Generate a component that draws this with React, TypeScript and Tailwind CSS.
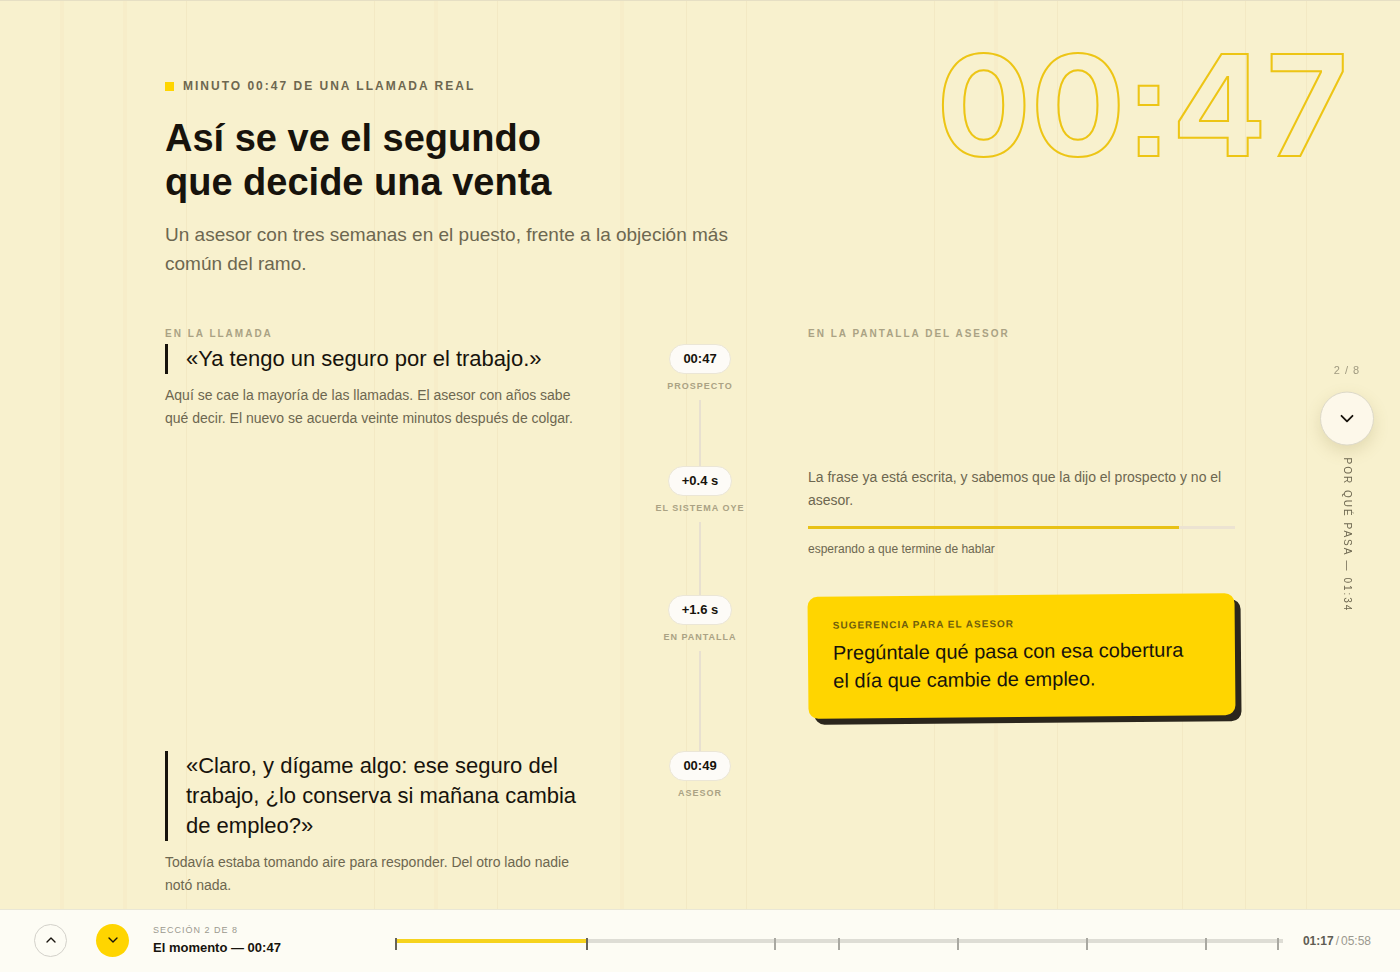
import { ChevronDown, ChevronUp } from "lucide-react"
import type { ReactNode } from "react"

const TOTAL_SECONDS = 358
const CURRENT_SECONDS = 77
const marks = [0, 77, 153, 179, 227, 279, 327, 356]

// background rules, left is in % of the page width
const rules = [
  { left: 4.3, wide: true },
  { left: 8.8, wide: true },
  { left: 13.3, wide: false },
  { left: 26.7, wide: false },
  { left: 31, wide: true },
  { left: 35.5, wide: false },
  { left: 44.3, wide: true },
  { left: 49, wide: false },
  { left: 53.3, wide: false },
  { left: 66.7, wide: false },
  { left: 71, wide: true },
  { left: 75.5, wide: false },
  { left: 84.4, wide: false },
  { left: 88.9, wide: false },
  { left: 93.3, wide: false },
]

function ColumnLabel({ children }: { children: ReactNode }) {
  return <h2 className="text-[10px] leading-5 font-bold tracking-[2px] uppercase text-[#aaa284]">{children}</h2>
}

function Quote({ children }: { children: ReactNode }) {
  return (
    <blockquote className="border-l-3 border-[#17130c] pl-[18px] text-[22px] leading-[30px] text-[#17130c]">
      {children}
    </blockquote>
  )
}

function Note({ children }: { children: ReactNode }) {
  return <p className="text-[14px] leading-[23px] text-[#6d6750]">{children}</p>
}

interface StepProps {
  time: string
  label: string
  last?: boolean
}

function Step({ time, label, last }: StepProps) {
  return (
    <div className="flex flex-col items-center">
      <span className="rounded-full border border-[#ebe6d6] bg-[#fdfbf7] px-[13px] text-[13px] leading-7 font-bold text-[#17130c]">
        {time}
      </span>
      <span className="mt-1 text-[9px] leading-4 font-bold tracking-[1px] whitespace-nowrap uppercase text-[#aaa284]">
        {label}
      </span>
      {!last && <span className="mt-1.5 w-0.5 flex-1 bg-[#e8e0d0]" />}
    </div>
  )
}

function Hero() {
  return (
    <header>
      <p className="flex items-center gap-[9px] text-[12px] leading-5 font-bold tracking-[2px] uppercase text-[#6d6750]">
        <span className="size-[9px] bg-[#ffd500]" />
        Minuto 00:47 de una llamada real
      </p>
      <h1 className="mt-5 text-[38px] leading-11 font-bold text-[#17130c]">
        Así se ve el segundo
        <br />
        que decide una venta
      </h1>
      <p className="mt-4 max-w-[580px] text-[19px] leading-[29px] text-[#6d6750]">
        Un asesor con tres semanas en el puesto, frente a la objeción más común del ramo.
      </p>
    </header>
  )
}

function Timeline() {
  return (
    <section className="mt-[46px] grid grid-cols-[1fr_120px_1fr] gap-x-12">
      <ColumnLabel>En la llamada</ColumnLabel>
      <span />
      <ColumnLabel>En la pantalla del asesor</ColumnLabel>

      <div className="pb-9">
        <Quote>«Ya tengo un seguro por el trabajo.»</Quote>
        <div className="mt-2.5">
          <Note>
            Aquí se cae la mayoría de las llamadas. El asesor con años sabe qué decir. El nuevo se acuerda veinte
            minutos después de colgar.
          </Note>
        </div>
      </div>
      <Step time="00:47" label="Prospecto" />
      <span />

      <span />
      <Step time="+0.4 s" label="El sistema oye" />
      <div className="pb-9">
        <Note>La frase ya está escrita, y sabemos que la dijo el prospecto y no el asesor.</Note>
        <div className="mt-3.5 h-[3px] bg-[#ece3d2]">
          <div className="h-full w-[87%] bg-[#e8c116]" />
        </div>
        <p className="mt-2.5 text-[12px] leading-5 text-[#6d6750]">esperando a que termine de hablar</p>
      </div>

      <span />
      <Step time="+1.6 s" label="En pantalla" />
      <div className="pb-[34px]">
        <div className="rotate-[-0.5deg] rounded-[10px] bg-[#ffd500] pt-[22px] pr-10 pb-6 pl-[25px] shadow-[6px_6px_0_#2b261d]">
          <p className="text-[10px] leading-[14px] font-bold tracking-[1px] uppercase text-[#6f5e0c]">
            Sugerencia para el asesor
          </p>
          <p className="mt-1.5 text-[20px] leading-7 text-[#17130c]">
            Pregúntale qué pasa con esa cobertura el día que cambie de empleo.
          </p>
        </div>
      </div>

      <div>
        <Quote>«Claro, y dígame algo: ese seguro del trabajo, ¿lo conserva si mañana cambia de empleo?»</Quote>
        <div className="mt-2.5">
          <Note>Todavía estaba tomando aire para responder. Del otro lado nadie notó nada.</Note>
        </div>
      </div>
      <Step time="00:49" label="Asesor" last />
      <span />
    </section>
  )
}

function SideNav() {
  return (
    <nav className="fixed top-1/2 right-[26px] flex -translate-y-1/2 flex-col items-center">
      <span className="text-[11px] leading-5 tracking-[1px] text-[#a09a80]">2 / 8</span>
      <button
        type="button"
        aria-label="Siguiente sección"
        className="mt-3 flex size-[54px] items-center justify-center rounded-full border border-[#dcd8c8] bg-[#fdf8ea] text-[#17130c] shadow-[0_6px_16px_#8c7d3c33]"
      >
        <ChevronDown size={22} />
      </button>
      <span className="mt-3 text-[10px] leading-4 tracking-[2px] uppercase text-[#6d6750] [writing-mode:vertical-rl]">
        Por qué pasa — 01:34
      </span>
    </nav>
  )
}

function Player() {
  return (
    <footer className="sticky bottom-0 flex h-[63px] items-center border-t border-[#e9e7d6] bg-[#fdfcf4] pr-[29px] pl-[34px]">
      <div className="flex items-center gap-[29px] pb-0.5">
        <button
          type="button"
          aria-label="Sección anterior"
          className="flex size-[33px] items-center justify-center rounded-full border border-[#d3d1ca] text-[#17130c]"
        >
          <ChevronUp size={16} />
        </button>
        <button
          type="button"
          aria-label="Sección siguiente"
          className="flex size-[33px] items-center justify-center rounded-full bg-[#ffd500] text-[#17130c]"
        >
          <ChevronDown size={16} />
        </button>
      </div>
      <div className="ml-6 w-[214px] pb-0.5">
        <p className="text-[9px] leading-4 tracking-[1px] uppercase text-[#9b998f]">Sección 2 de 8</p>
        <p className="text-[13px] leading-5 font-bold text-[#17130c]">El momento — 00:47</p>
      </div>
      <div className="relative ml-[29px] h-1 flex-1 bg-[#deddd5]">
        <div className="h-full bg-[#f6d31d]" style={{ width: `${(CURRENT_SECONDS / TOTAL_SECONDS) * 100}%` }} />
        {marks.map((mark) => (
          <span
            key={mark}
            className={
              mark <= CURRENT_SECONDS
                ? "absolute -top-px -ml-px h-3 w-0.5 bg-[#66635a]"
                : "absolute -top-px -ml-px h-3 w-0.5 bg-[#a9a8a1]"
            }
            style={{ left: `${(mark / TOTAL_SECONDS) * 100}%` }}
          />
        ))}
      </div>
      <p className="ml-5 text-[12px] leading-4 text-[#9b998f] tabular-nums">
        <b className="text-[#5f5c53]">01:17</b>
        <span className="mx-0.5">/</span>05:58
      </p>
    </footer>
  )
}

export default function App() {
  return (
    <div className="flex min-h-screen flex-col bg-[#f8f1ce] font-['Liberation_Sans',Arial,sans-serif]">
      <main className="relative flex-1 border-t border-[#e6dfc4] pt-[75px] pb-3">
        <div aria-hidden="true" className="absolute inset-0">
          {rules.map(({ left, wide }) => (
            <span
              key={left}
              className={wide ? "absolute inset-y-0 w-1 bg-[#f7edc9]" : "absolute inset-y-0 w-px bg-[#f3e9c4]"}
              style={{ left: `${left}%` }}
            />
          ))}
        </div>
        <span
          aria-hidden="true"
          className="absolute top-[34px] right-[52px] font-['Inter',sans-serif] text-[140px] leading-[140px] font-bold text-transparent [-webkit-text-stroke:2px_#edc515]"
        >
          00<span className="font-['Liberation_Sans',Arial,sans-serif]">:</span>47
        </span>
        <div className="relative mx-auto max-w-[1070px]">
          <Hero />
          <Timeline />
        </div>
      </main>
      <SideNav />
      <Player />
    </div>
  )
}
